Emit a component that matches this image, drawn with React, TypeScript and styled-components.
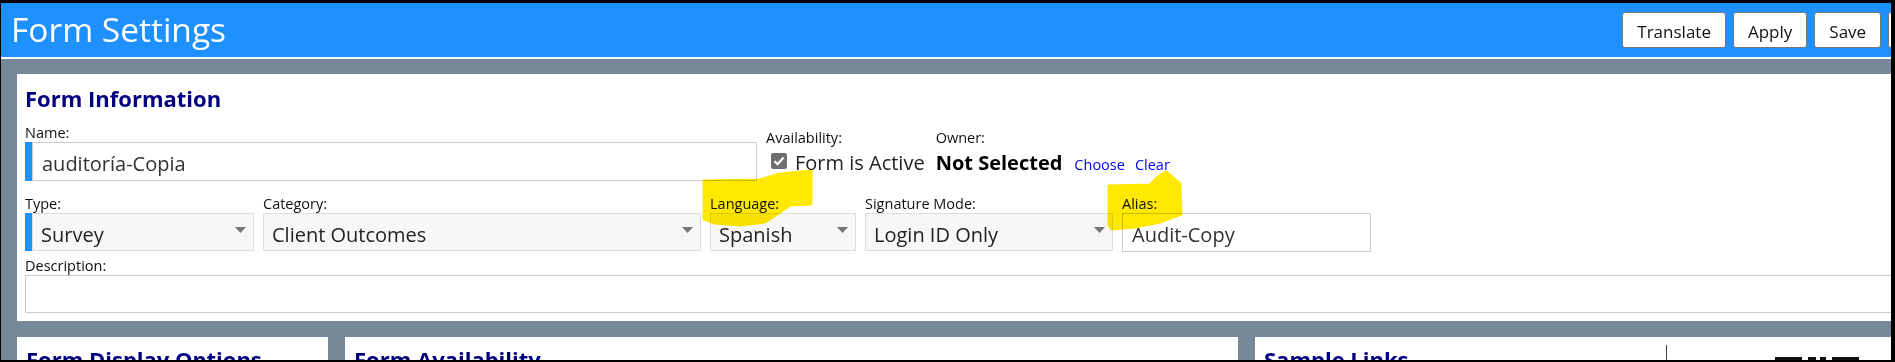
import React from "react";
import styled, { createGlobalStyle } from "styled-components";

const GlobalStyle = createGlobalStyle`
  html, body {
    margin: 0;
    padding: 0;
    background: #000;
    overflow: hidden;
  }
  body {
    font-family: "Open Sans", "Noto Sans", sans-serif;
  }
  * {
    box-sizing: border-box;
  }
`;

const Frame = styled.div`
  width: 1895px;
  height: 362px;
  border-style: solid;
  border-color: #000;
  border-width: 3px 4px 2px 1px;
  background: #778899;
  overflow: hidden;
`;

const Page = styled.div`
  width: 1968px;
`;

const Header = styled.header`
  display: flex;
  align-items: center;
  height: 56px;
  padding: 0 8px 0 10px;
  background: #1e90ff;
  border-bottom: 2px solid #fff;
`;

const Title = styled.h1`
  margin: 0;
  font-size: 33.5px;
  font-weight: 400;
  line-height: 1.36;
  color: #fff;
`;

const ButtonBar = styled.div`
  display: flex;
  gap: 7px;
  margin-left: auto;
`;

const Button = styled.button`
  height: 36px;
  padding: 2px 14px 0;
  font-family: inherit;
  font-size: 17px;
  color: #111;
  background: #fff;
  border: 1px solid #767676;
  border-radius: 3px;
`;

const Body = styled.main`
  padding: 15px 0 0 16px;
`;

const Card = styled.section`
  position: relative;
  background: #fff;
  padding: 9px 0 8px 8px;
`;

const SectionTitle = styled.h2`
  margin: 0;
  font-size: 22px;
  font-weight: 700;
  line-height: 30px;
  color: #000080;
  white-space: nowrap;
`;

const FieldRow = styled.div<{ $top: number; $bottom?: number }>`
  display: flex;
  align-items: flex-start;
  gap: 9px;
  margin-top: ${(p) => p.$top}px;
  margin-bottom: ${(p) => p.$bottom ?? 0}px;
`;

const Field = styled.div<{ $width?: number; $drop?: number; $left?: number }>`
  display: flex;
  flex-direction: column;
  width: ${(p) => (p.$width ? `${p.$width}px` : "auto")};
  padding-top: ${(p) => p.$drop ?? 0}px;
  margin-left: ${(p) => p.$left ?? 0}px;
`;

const Label = styled.label`
  font-size: 14.5px;
  line-height: 18px;
  color: #111;
  white-space: nowrap;
`;

const Accent = styled.div`
  display: flex;
  border-left: 7px solid #1e90ff;
`;

const TextBox = styled.input<{ $height?: number }>`
  width: 100%;
  height: ${(p) => p.$height ?? 39}px;
  padding: 3px 9px 0;
  font-family: inherit;
  font-size: 20px;
  color: #333;
  background: #fff;
  border: 1px solid #ccc;
  outline: none;
`;

const SelectWrap = styled.div`
  position: relative;
  width: 100%;
`;

const Select = styled.select`
  width: 100%;
  height: 38px;
  padding: 4px 30px 0 8px;
  appearance: none;
  font-family: inherit;
  font-size: 20px;
  color: #222;
  background: #f7f7f7;
  border: 1px solid #ddd;
  border-radius: 0;
  outline: none;
`;

const Arrow = styled.svg`
  position: absolute;
  top: 14px;
  right: 8px;
  pointer-events: none;
`;

const ValueRow = styled.div`
  display: flex;
  align-items: baseline;
  margin-top: 2px;
  font-size: 20px;
  line-height: 27px;
  color: #222;
  white-space: nowrap;
`;

const Check = styled.span`
  display: inline-flex;
  align-items: center;
  justify-content: center;
  align-self: flex-start;
  width: 16px;
  height: 16px;
  margin: 4px 8px 0 5px;
  background: #6f6f6f;
  border-radius: 2px;
`;

const OwnerName = styled.strong`
  font-weight: 700;
  color: #000;
`;

const LinkButton = styled.a<{ $gap: number }>`
  margin-left: ${(p) => p.$gap}px;
  font-size: 14.5px;
  color: #0000ee;
  text-decoration: none;
`;

const Highlights = styled.svg`
  position: absolute;
  left: 0;
  top: 0;
  pointer-events: none;
  mix-blend-mode: multiply;
`;

const LowerRow = styled.div`
  display: grid;
  grid-template-columns: 311px 893px 1fr;
  column-gap: 17px;
  margin-top: 16px;
`;

const LowerPanel = styled.section`
  height: 40px;
  background: #fff;
  padding: 7px 0 0 9px;
`;

const LinksPanel = styled.section`
  display: flex;
  height: 40px;
  background: #fff;
`;

const LinksColumn = styled.div`
  width: 411px;
  padding: 7px 0 0 9px;
`;

const CodeColumn = styled.div`
  margin-top: 8px;
  padding: 12px 0 0 108px;
  border-left: 1px solid #444;
`;

const DropArrow = () => (
  <Arrow width="11" height="6" viewBox="0 0 11 6">
    <path d="M0 0 H11 L5.5 6 Z" fill="#777" />
  </Arrow>
);

type Choice = { label: string; value: string; width: number; accent?: boolean };

const choices: Choice[] = [
  { label: "Type:", value: "Survey", width: 229, accent: true },
  { label: "Category:", value: "Client Outcomes", width: 438 },
  { label: "Language:", value: "Spanish", width: 146 },
  { label: "Signature Mode:", value: "Login ID Only", width: 248 },
];

const ChoiceField: React.FC<{ item: Choice }> = ({ item }) => {
  const control = (
    <SelectWrap>
      <Select defaultValue={item.value}>
        <option>{item.value}</option>
      </Select>
      <DropArrow />
    </SelectWrap>
  );
  return (
    <Field $width={item.width}>
      <Label>{item.label}</Label>
      {item.accent ? <Accent>{control}</Accent> : control}
    </Field>
  );
};

const QrTop = () => (
  <svg width="84" height="40" viewBox="0 0 84 40">
    <rect x="0" y="0" width="27" height="27" fill="#111" />
    <rect x="4" y="4" width="19" height="19" fill="#fff" />
    <rect x="8" y="8" width="11" height="11" fill="#111" />
    <rect x="33" y="0" width="8" height="4" fill="#111" />
    <rect x="45" y="0" width="6" height="8" fill="#111" />
    <rect x="57" y="0" width="27" height="27" fill="#111" />
    <rect x="61" y="4" width="19" height="19" fill="#fff" />
    <rect x="65" y="8" width="11" height="11" fill="#111" />
  </svg>
);

const App: React.FC = () => {
  return (
    <>
      <GlobalStyle />
      <Frame>
        <Page>
          <Header>
            <Title>Form Settings</Title>
            <ButtonBar>
              <Button>Translate</Button>
              <Button>Apply</Button>
              <Button>Save</Button>
              <Button>Close</Button>
            </ButtonBar>
          </Header>

          <Body>
            <Card>
              <SectionTitle>Form Information</SectionTitle>

              <FieldRow $top={11}>
                <Field $width={732}>
                  <Label>Name:</Label>
                  <Accent>
                    <TextBox defaultValue="auditoría-Copia" />
                  </Accent>
                </Field>
                <Field $drop={5}>
                  <Label>Availability:</Label>
                  <ValueRow>
                    <Check>
                      <svg width="12" height="10" viewBox="0 0 12 10">
                        <path d="M1.5 5.2 L4.6 8.2 L10.5 1.6" fill="none" stroke="#fff" strokeWidth="2.2" />
                      </svg>
                    </Check>
                    Form is Active
                  </ValueRow>
                </Field>
                <Field $drop={5} $left={2}>
                  <Label>Owner:</Label>
                  <ValueRow>
                    <OwnerName>Not Selected</OwnerName>
                    <LinkButton $gap={12}>Choose</LinkButton>
                    <LinkButton $gap={10}>Clear</LinkButton>
                  </ValueRow>
                </Field>
              </FieldRow>

              <FieldRow $top={14} $bottom={5}>
                {choices.map((c) => (
                  <ChoiceField key={c.label} item={c} />
                ))}
                <Field $width={249}>
                  <Label>Alias:</Label>
                  <TextBox defaultValue="Audit-Copy" />
                </Field>
              </FieldRow>

              <Field>
                <Label>Description:</Label>
                <TextBox $height={38} />
              </Field>

              <Highlights width="1300" height="250">
                <path
                  d="M687 107 L743 106 L763 100 L794 97 L794 130 L773 131 L763 138 L748 148 L723 151 L698 149 L687 145 Z"
                  fill="#ffe900"
                  stroke="#ffe900"
                  strokeWidth="3"
                  strokeLinejoin="round"
                />
                <path
                  d="M1092 112 L1133 111 L1141 103 L1149 98 L1155 103 L1163 110 L1164 140 L1143 148 L1118 153 L1095 155 L1092 151 Z"
                  fill="#ffe900"
                  stroke="#ffe900"
                  strokeWidth="3"
                  strokeLinejoin="round"
                />
              </Highlights>
            </Card>

            <LowerRow>
              <LowerPanel>
                <SectionTitle>Form Display Options</SectionTitle>
              </LowerPanel>
              <LowerPanel>
                <SectionTitle>Form Availability</SectionTitle>
              </LowerPanel>
              <LinksPanel>
                <LinksColumn>
                  <SectionTitle>Sample Links</SectionTitle>
                </LinksColumn>
                <CodeColumn>
                  <QrTop />
                </CodeColumn>
              </LinksPanel>
            </LowerRow>
          </Body>
        </Page>
      </Frame>
    </>
  );
};

export default App;
